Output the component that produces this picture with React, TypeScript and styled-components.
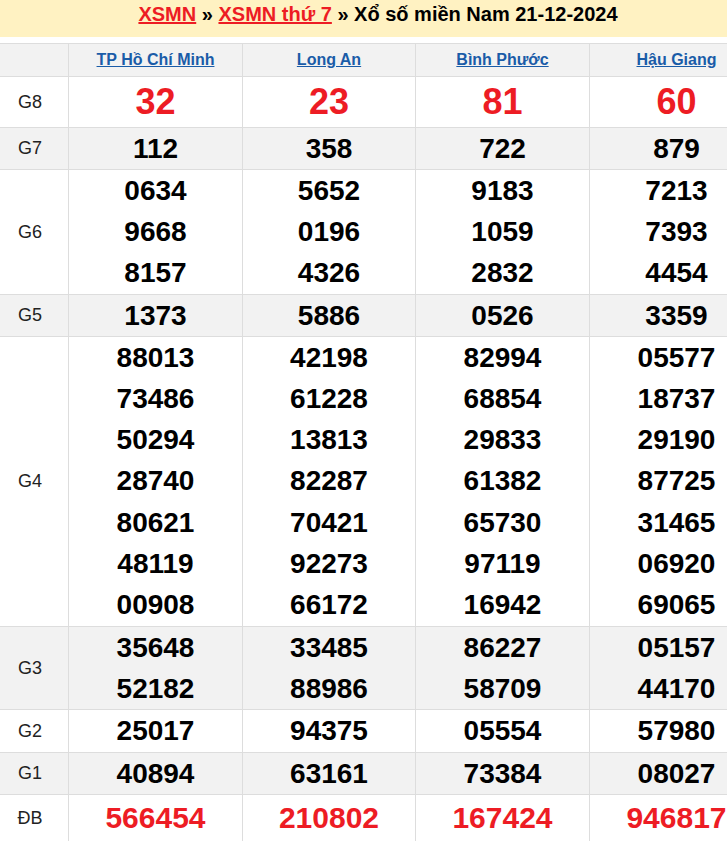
import React from "react";
import styled, { createGlobalStyle } from "styled-components";

const Global = createGlobalStyle`
  html, body { margin: 0; padding: 0; background: #fff; overflow: hidden; }
  body { font-family: "Liberation Sans", Arial, sans-serif; }
`;

const Page = styled.div`
  width: 772px;
  margin-left: -8px;
`;

const TitleBand = styled.h2`
  margin: 0 0 6px;
  padding: 3px 0 11px;
  background: #fff2c2;
  text-align: center;
  font-size: 20px;
  line-height: 23px;
  font-weight: bold;
  color: #000;
`;

const RedLink = styled.a`
  color: #ed1c24;
  text-decoration: underline;
`;

const Table = styled.div`
  border-top: 1px solid #dddddd;
`;

const Row = styled.div<{ $shade: boolean; $h: number }>`
  display: grid;
  grid-template-columns: 76px 174px 173px 174px 174px;
  height: ${(p) => p.$h}px;
  box-sizing: content-box;
  background: ${(p) => (p.$shade ? "#f2f2f2" : "#ffffff")};
  border-bottom: 1px solid #dddddd;
`;

const LabelCell = styled.div`
  display: flex;
  align-items: center;
  justify-content: center;
  font-size: 18px;
  color: #222;
`;

const Cell = styled.div`
  border-left: 1px solid #dddddd;
  display: flex;
  flex-direction: column;
`;

const HeadLink = styled.a`
  flex: 1;
  display: flex;
  align-items: center;
  justify-content: center;
  font-size: 16px;
  font-weight: bold;
  color: #1a5ca8;
  text-decoration: underline;
`;

type Kind = "big" | "special" | "normal";

const Num = styled.div<{ $kind: Kind }>`
  flex: 1;
  display: flex;
  align-items: center;
  justify-content: center;
  font-weight: bold;
  font-size: ${(p) => (p.$kind === "big" ? 36 : p.$kind === "special" ? 30 : 28)}px;
  color: ${(p) => (p.$kind === "normal" ? "#000" : "#ed1c24")};
  line-height: 1;
`;

const provinces = ["TP Hồ Chí Minh", "Long An", "Bình Phước", "Hậu Giang"];

const rows: { label: string; h: number; kind: Kind; values: string[][] }[] = [
  { label: "G8", h: 50, kind: "big", values: [["32"], ["23"], ["81"], ["60"]] },
  { label: "G7", h: 41, kind: "normal", values: [["112"], ["358"], ["722"], ["879"]] },
  {
    label: "G6",
    h: 124,
    kind: "normal",
    values: [
      ["0634", "9668", "8157"],
      ["5652", "0196", "4326"],
      ["9183", "1059", "2832"],
      ["7213", "7393", "4454"],
    ],
  },
  { label: "G5", h: 41, kind: "normal", values: [["1373"], ["5886"], ["0526"], ["3359"]] },
  {
    label: "G4",
    h: 289,
    kind: "normal",
    values: [
      ["88013", "73486", "50294", "28740", "80621", "48119", "00908"],
      ["42198", "61228", "13813", "82287", "70421", "92273", "66172"],
      ["82994", "68854", "29833", "61382", "65730", "97119", "16942"],
      ["05577", "18737", "29190", "87725", "31465", "06920", "69065"],
    ],
  },
  {
    label: "G3",
    h: 82,
    kind: "normal",
    values: [
      ["35648", "52182"],
      ["33485", "88986"],
      ["86227", "58709"],
      ["05157", "44170"],
    ],
  },
  { label: "G2", h: 42, kind: "normal", values: [["25017"], ["94375"], ["05554"], ["57980"]] },
  { label: "G1", h: 41, kind: "normal", values: [["40894"], ["63161"], ["73384"], ["08027"]] },
  { label: "ĐB", h: 46, kind: "special", values: [["566454"], ["210802"], ["167424"], ["946817"]] },
];

export default function App() {
  return (
    <Page>
      <Global />
      <TitleBand>
        <RedLink href="#">XSMN</RedLink> » <RedLink href="#">XSMN thứ 7</RedLink> » Xổ số miền Nam 21-12-2024
      </TitleBand>
      <Table>
        <Row $shade={true} $h={32}>
          <LabelCell />
          {provinces.map((p) => (
            <Cell key={p}>
              <HeadLink href="#">{p}</HeadLink>
            </Cell>
          ))}
        </Row>
        {rows.map((r, i) => (
          <Row key={r.label} $shade={i % 2 === 1} $h={r.h}>
            <LabelCell>{r.label}</LabelCell>
            {r.values.map((col, j) => (
              <Cell key={j}>
                {col.map((v, k) => (
                  <Num key={k} $kind={r.kind}>
                    {v}
                  </Num>
                ))}
              </Cell>
            ))}
          </Row>
        ))}
      </Table>
    </Page>
  );
}
